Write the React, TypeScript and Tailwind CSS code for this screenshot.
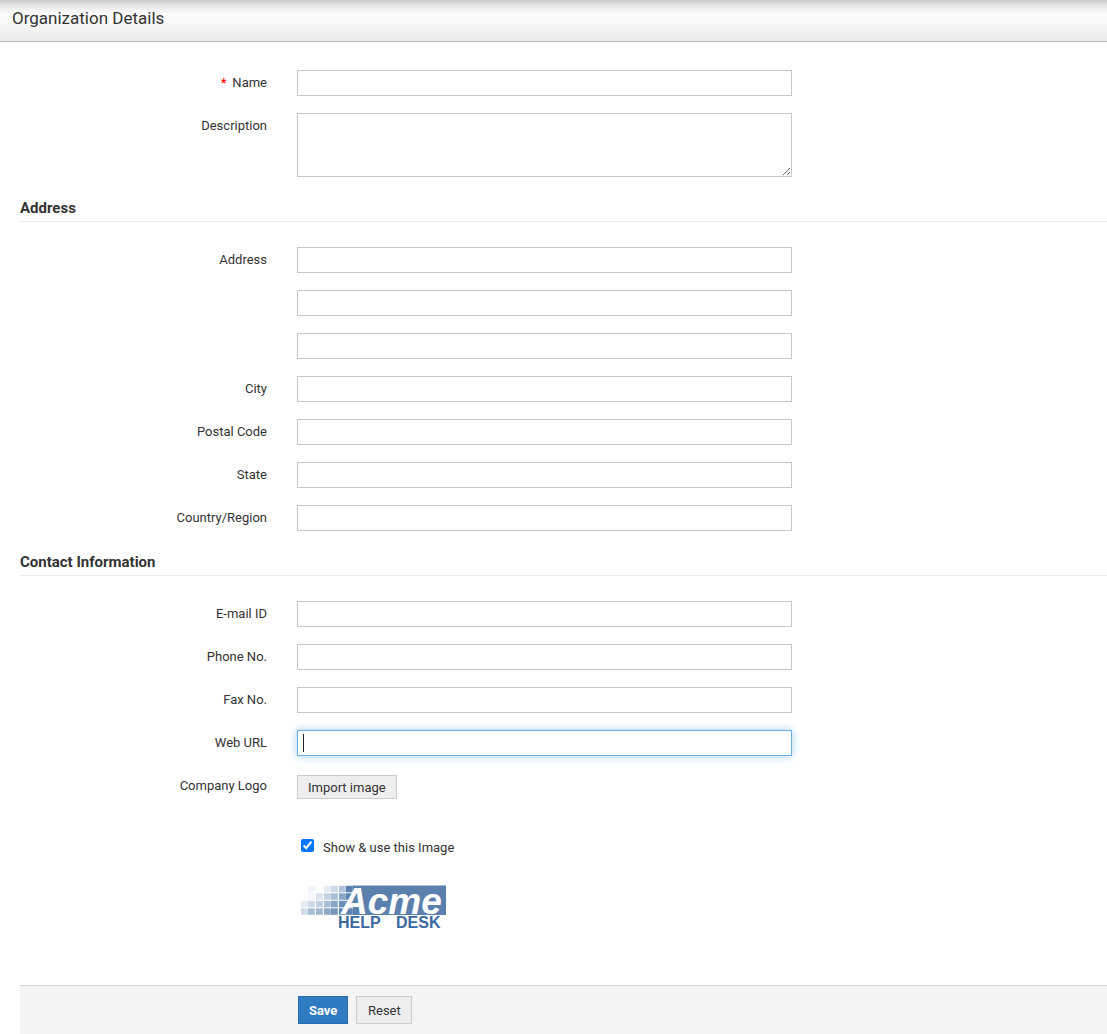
import type { ReactNode } from 'react';

const fieldClass =
  'block w-full border border-[#c8c8c8] bg-white px-1.5 outline-none focus:border-[#66afe9] focus:shadow-[0_0_8px_rgba(102,175,233,0.6)]';

function Row({ id, label, required, children }: { id: string; label: string; required?: boolean; children: ReactNode }) {
  return (
    <div className="grid grid-cols-[247px_minmax(0,495px)] gap-x-[30px]">
      <label htmlFor={id} className="pt-1 text-right leading-[18px]">
        {required && <span className="mr-1.5 text-[12px] font-bold text-[#f00]">*</span>}
        {label}
      </label>
      <div>{children}</div>
    </div>
  );
}

function TextRow({ id, label, required }: { id: string; label: string; required?: boolean }) {
  return (
    <Row id={id} label={label} required={required}>
      <input id={id} type="text" aria-label={label || id} className={`${fieldClass} h-[26px]`} />
    </Row>
  );
}

function Section({ title, children }: { title: string; children: ReactNode }) {
  return (
    <section>
      <h2 className="border-b border-[#ececec] pt-[21px] pb-[3px] text-[15px] leading-5 font-bold">{title}</h2>
      <div className="flex flex-col gap-[17px] pt-[25px]">{children}</div>
    </section>
  );
}

const mosaic = [
  ['#ffffff', '#f1f4f9', '#ffffff', '#e6ecf4', '#cfdae8', '#b1c3da', '#5b80ad'],
  ['#ffffff', '#f6f8fb', '#dbe3ee', '#c3d0e1', '#a9bdd6', '#88a4c6', '#5b80ad'],
  ['#e6ecf4', '#cfdae8', '#c3d0e1', '#a9bdd6', '#88a4c6', '#6a8cb6', '#5b80ad'],
  ['#d3ddea', '#a9bdd6', '#a1b6d1', '#8fa9c9', '#7997be', '#5b80ad', '#5b80ad'],
];
const columns = [1, 8, 16, 24, 31, 39, 46];

function Logo() {
  return (
    <svg width="147" height="46" viewBox="0 0 147 46" className="overflow-visible" role="img" aria-label="Acme Help Desk">
      <rect x="53" y="0.5" width="93" height="29.5" fill="#5b80ad" />
      {mosaic.map((row, r) =>
        row.map((color, c) => (
          <rect key={`${r}-${c}`} x={columns[c]} y={0.8 + r * 7.5} width="6.8" height="6.5" fill={color} />
        )),
      )}
      <text x="41" y="29" fontFamily="Liberation Sans" fontWeight="700" fontStyle="italic" fontSize="37" fill="#fff">
        Acme
      </text>
      <g fontFamily="Liberation Sans" fontWeight="700" fontSize="16" fill="#3a68a0">
        <text x="38" y="43">HELP</text>
        <text x="96" y="43">DESK</text>
      </g>
    </svg>
  );
}

export default function App() {
  return (
    <div className="bg-white font-['Roboto',sans-serif] text-[13px] text-[#333]">
      <header className="border-b border-[#bdbdbd] bg-[linear-gradient(to_bottom,#c9c9c9_0px,#e9e9e9_6px,#fbfbfb_14px,#f8f8f8_24px,#e9e9e9_41px)] px-3 pt-2 pb-[13px]">
        <h1 className="text-[17px] leading-5">Organization Details</h1>
      </header>
      <form className="pl-5" onSubmit={(e) => e.preventDefault()}>
        <div className="flex flex-col gap-[17px] pt-7">
          <TextRow id="name" label="Name" required />
          <Row id="description" label="Description">
            <textarea id="description" className={`${fieldClass} h-16 resize`} />
          </Row>
        </div>
        <Section title="Address">
          <TextRow id="address" label="Address" />
          <TextRow id="address-line-2" label="" />
          <TextRow id="address-line-3" label="" />
          <TextRow id="city" label="City" />
          <TextRow id="postal-code" label="Postal Code" />
          <TextRow id="state" label="State" />
          <TextRow id="country" label="Country/Region" />
        </Section>
        <Section title="Contact Information">
          <TextRow id="email" label="E-mail ID" />
          <TextRow id="phone" label="Phone No." />
          <TextRow id="fax" label="Fax No." />
          <Row id="web-url" label="Web URL">
            <div className="relative">
              <input id="web-url" type="text" autoFocus className={`${fieldClass} h-[26px] caret-transparent`} />
              <span className="absolute top-1 left-1.5 h-[18px] w-px bg-[#222]" />
            </div>
          </Row>
          <Row id="logo" label="Company Logo">
            <button id="logo" type="button" className="mt-0.5 block h-6 border border-[#ccc] bg-[#eee] px-2.5 pt-0.5">
              Import image
            </button>
            <label className="mt-[39px] flex items-center gap-[9px] pl-1 leading-5">
              <input type="checkbox" defaultChecked className="m-0 mb-1.5 h-[13px] w-[13px]" />
              Show &amp; use this Image
            </label>
            <div className="mt-[27px] ml-[3px]">
              <Logo />
            </div>
          </Row>
        </Section>
        <footer className="mt-[54px] flex gap-2 border-t border-[#d5d5d5] bg-[#f4f4f4] py-2.5 pl-[278px]">
          <button type="submit" className="h-7 border border-[#2a6cab] bg-[#2f7bc1] px-2.5 pt-0.5 font-bold text-white">
            Save
          </button>
          <button type="reset" className="h-7 min-w-14 border border-[#ccc] bg-[#eee] px-2.5 pt-0.5">
            Reset
          </button>
        </footer>
      </form>
    </div>
  );
}
